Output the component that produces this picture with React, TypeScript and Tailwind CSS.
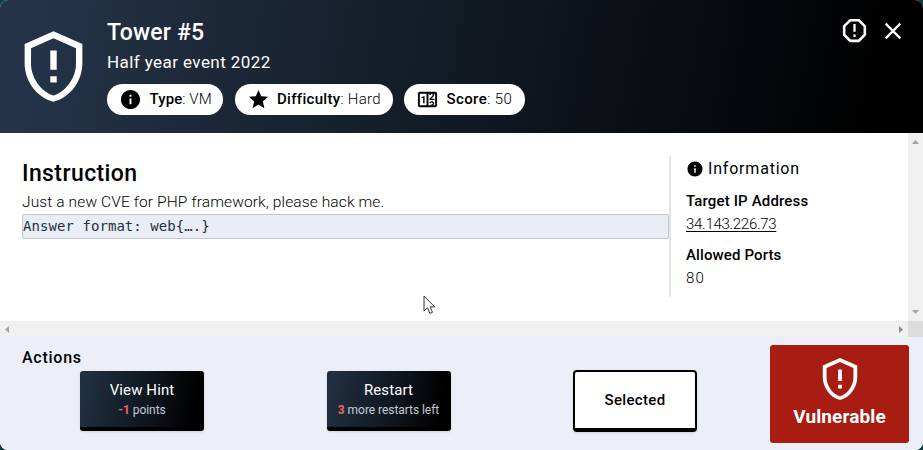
import React from "react";
import { MdInfo, MdStar, MdClose } from "react-icons/md";

function ShieldAlert({ size }: { size: number }) {
  return (
    <svg width={size} height={size} viewBox="0 0 24 24" fill="currentColor" className="shrink-0">
      <path d="M21 11C21 16.55 17.16 21.74 12 23C6.84 21.74 3 16.55 3 11V5L12 1L21 5V11M12 21C15.75 20 19 15.54 19 11.22V6.3L12 3.18L5 6.3V11.22C5 15.54 8.25 20 12 21M11 7H13V13H11V7M11 15H13V17H11V15Z" />
    </svg>
  );
}

function OctagonAlert() {
  return (
    <svg width="31" height="31" viewBox="0 0 24 24" fill="currentColor">
      <path d="M8.27 3L3 8.27V15.73L8.27 21H15.73L21 15.73V8.27L15.73 3M9.1 5H14.9L19 9.1V14.9L14.9 19H9.1L5 14.9V9.1M11.1 15H12.9V17H11.1V15M11.1 7H12.9V13H11.1V7" />
    </svg>
  );
}

function ScoreIcon() {
  return (
    <svg width="23" height="23" viewBox="0 0 24 24" fill="currentColor" className="shrink-0">
      <path d="M4 4H20C21.11 4 22 4.89 22 6V18C22 19.11 21.11 20 20 20H4C2.89 20 2 19.11 2 18V6C2 4.89 2.89 4 4 4M4 6V18H11V6H4M20 18V6H18.76C19 6.54 18.95 7.07 18.95 7.13C18.88 7.8 18.41 8.5 18.24 8.75L15.91 11.3L19.23 11.28L19.24 12.5L14.04 12.47L14 11.47C14 11.47 17.05 8.24 17.2 7.95C17.34 7.67 17.91 6 16.5 6C15.27 6.05 15.41 7.3 15.41 7.3L13.87 7.31C13.87 7.31 13.88 6.65 14.25 6H13V18H15.58L15.57 17.14L16.54 17.13C16.54 17.13 17.45 16.97 17.46 16.08C17.5 15.08 16.65 15.08 16.5 15.08C16.37 15.08 15.43 15.13 15.43 15.95H13.91C13.91 15.95 13.95 13.89 16.5 13.89C19.1 13.89 18.96 15.91 18.96 15.91C18.96 15.91 19 17.16 17.85 17.63L18.37 18H20M8.92 16H7.42V10.2L5.62 10.76V9.53L8.76 8.41H8.92V16Z" />
    </svg>
  );
}

function Pill({ icon, label, value, className }: { icon: React.ReactNode; label: string; value: string; className: string }) {
  return (
    <div className={`flex h-[31px] items-center rounded-full bg-white pl-3 text-[15px] leading-[31px] text-black whitespace-nowrap ${className}`}>
      <span className="flex w-[30.5px] shrink-0 items-center">{icon}</span>
      <span><span className="font-medium">{label}</span><span className="font-light">: {value}</span></span>
    </div>
  );
}

function ActionButton({ title, count, note }: { title: string; count: string; note: string }) {
  return (
    <button className="flex h-[60px] w-[124px] flex-col items-center rounded-[3px] border-b-4 border-black bg-linear-[100deg] from-[#212f42] from-5% via-[#0d131a] via-60% to-black to-90% pt-[9px] whitespace-nowrap text-white shadow-sm">
      <span className="text-[15px] leading-5 tracking-[0.1px]">{title}</span>
      <span className="text-[12px] leading-5 tracking-[-0.05px] text-[#c5cad8]">
        <b className="text-[#ed6469]">{count}</b> {note}
      </span>
    </button>
  );
}

export default function App() {
  return (
    <div className="h-[450px] w-[923px] bg-[#073c43] font-['Roboto','Liberation_Sans',sans-serif]">
      <main className="flex h-[450px] flex-col overflow-hidden rounded-[8px] bg-white text-black">
        <header className="flex h-[133px] shrink-0 bg-linear-[100deg] from-[#243347] from-5% via-[#0c1118] via-65% to-black to-95% text-white">
          <div className="w-[107px] shrink-0 pt-[27.5px] pl-[14.5px]"><ShieldAlert size={77} /></div>
          <div className="flex-1 pt-[18px]">
            <h1 className="text-[23px] leading-[30px] font-medium tracking-[0.2px]">Tower #5</h1>
            <p className="mt-[2px] text-[17px] leading-[24px] tracking-[0.42px]">Half year event 2022</p>
            <div className="mt-[10px] flex gap-[11.5px]">
              <Pill className="w-[116px] tracking-[0.1px]" icon={<MdInfo size={23} />} label="Type" value="VM" />
              <Pill className="w-[158px] tracking-[0.3px]" icon={<MdStar size={23} />} label="Difficulty" value="Hard" />
              <Pill className="w-[120.5px] tracking-[0.4px]" icon={<ScoreIcon />} label="Score" value="50" />
            </div>
          </div>
          <div className="flex gap-[9px] pt-[15px] pr-4">
            <OctagonAlert />
            <MdClose size={28} className="mt-[2px]" />
          </div>
        </header>

        <section className="flex h-[188px] shrink-0">
          <div className="w-[669px] pt-[26px] pl-[22px]">
            <h2 className="text-[23px] leading-[30px] font-medium tracking-[0.4px]">Instruction</h2>
            <p className="mt-[1px] text-[15.5px] leading-6 font-light tracking-[0.12px]">Just a new CVE for PHP framework, please hack me.</p>
            <pre className="h-[25px] w-[647px] rounded-[2px] border border-[#c0c5ce] bg-[#e9edf5] font-['DejaVu_Sans_Mono',monospace] text-[14px] leading-[23px] tracking-[0.06px] text-[#26303d]">Answer format: web{"{….}"}</pre>
          </div>
          <aside className="mt-[23px] h-[141px] flex-1 border-l-2 border-[#e3e5ec] pl-[15px]">
            <h3 className="flex h-6 items-center gap-[4px] pt-px text-[16px] tracking-[0.8px]"><MdInfo size={18} />Information</h3>
            <p className="mt-[9px] text-[15px] leading-6 font-medium tracking-[0.15px]">Target IP Address</p>
            <a className="block text-[15px] leading-[23px] font-light tracking-[-0.28px] underline underline-offset-2">34.143.226.73</a>
            <p className="mt-[7px] text-[15px] leading-6 font-medium tracking-[0.12px]">Allowed Ports</p>
            <p className="text-[15px] leading-[23px] font-light tracking-[1.2px]">80</p>
          </aside>
          <div className="flex w-[15px] flex-col items-center justify-between bg-[#f0f0f0] pt-[7px] pb-[7px]">
            <svg width="7" height="4"><path d="M0 4 3.5 0 7 4Z" fill="#a3a3a3" /></svg>
            <svg width="7" height="4"><path d="M0 0 3.5 4 7 0Z" fill="#a3a3a3" /></svg>
          </div>
        </section>

        <div className="flex h-4 shrink-0 items-center bg-[#f0f0f0]">
          <div className="flex flex-1 items-center justify-between px-[5px]">
            <svg width="4" height="7"><path d="M4 0 0 3.5 4 7Z" fill="#a3a3a3" /></svg>
            <svg width="4" height="7"><path d="M0 0 4 3.5 0 7Z" fill="#8c8c8c" /></svg>
          </div>
          <div className="h-4 w-[15px] bg-[#dcdcdc]" />
        </div>

        <footer className="flex h-[113px] shrink-0 bg-[#eceff8]">
          <div className="w-[770px] pt-2">
            <h3 className="pt-px pl-[22px] text-[16px] leading-6 font-medium tracking-[0.75px]">Actions</h3>
            <div className="flex items-center gap-[122.5px] pl-20">
              <ActionButton title="View Hint" count="-1" note="points" />
              <ActionButton title="Restart" count="3" note="more restarts left" />
              <button className="h-[62px] w-[124px] rounded-[4px] border-2 border-b-4 border-black bg-white text-[15px] font-medium tracking-[0.35px] shadow-sm">Selected</button>
            </div>
          </div>
          <button className="mt-2 flex h-[98px] w-[139px] flex-col items-center rounded-[3px] bg-[#a81c11] pt-[11px] text-white">
            <ShieldAlert size={46} />
            <span className="mt-[3px] text-[19px] leading-6 font-bold tracking-[0.1px]">Vulnerable</span>
          </button>
        </footer>
      </main>
      <svg className="absolute top-[295px] left-[423px]" width="13" height="20" viewBox="0 0 13 20">
        <path d="M1 1v15l3.5-3.2 2.4 5.6 2.6-1.1-2.4-5.4h4.6Z" fill="#fff" stroke="#333" strokeWidth="1" />
      </svg>
    </div>
  );
}
